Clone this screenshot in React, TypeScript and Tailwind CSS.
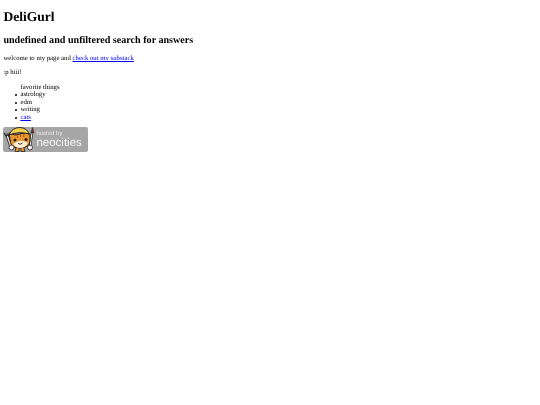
function NeocitiesBadge() {
  return (
    <div className="relative mt-[5.5px] h-[25px] w-[85px] rounded-[2px] bg-[#a6a6a6]">
      <svg className="absolute left-0 top-0" width="34" height="25" viewBox="0 0 34 25">
        {/* wrench */}
        <path d="M4 8 L8 20" stroke="#222" strokeWidth="3" strokeLinecap="round" />
        <path d="M4 8 L8 20" stroke="#e8e8e8" strokeWidth="1.4" strokeLinecap="round" />
        <path d="M1 6 L3 9 L7 7" fill="none" stroke="#222" strokeWidth="1.3" />
        {/* paint brush */}
        <path d="M29 6 L27 19" stroke="#222" strokeWidth="2.4" />
        <path d="M29 6 L27 19" stroke="#eee" strokeWidth="1.1" />
        <path d="M28 6 L29.5 0.5 L31 6 Z" fill="#8c2f2a" stroke="#222" strokeWidth="0.6" />
        {/* head */}
        <path d="M7 12 L6 6 L12 8 L21 6 L27 7 L27 14 Q26 21 18 21 L14 21 Q7 20 7 12 Z" fill="#e8962f" stroke="#222" strokeWidth="1" />
        {/* helmet */}
        <path d="M6 8 Q9 0.5 17 0.5 Q24 1 26 7 Q16 4 6 8 Z" fill="#f3cf4d" stroke="#222" strokeWidth="1" />
        {/* muzzle */}
        <path d="M10 17 Q17 11 25 16 Q22 21 17 21 Q13 21 10 17 Z" fill="#fcefd4" />
        <circle cx="12" cy="13" r="1.5" fill="#222" />
        <circle cx="23" cy="12.5" r="1.5" fill="#222" />
        <path d="M15 16 L17 17.4 L19.5 16" fill="none" stroke="#222" strokeWidth="0.9" />
        <path d="M14 7.5 L14.5 10.5 M17.5 7 L17.5 10 M21 7 L20.5 10" stroke="#a8581c" strokeWidth="1" />
        {/* paws and feet */}
        <circle cx="8.5" cy="20.5" r="2.5" fill="#f5f5f5" stroke="#222" strokeWidth="0.8" />
        <circle cx="27" cy="20.5" r="2.5" fill="#f5f5f5" stroke="#222" strokeWidth="0.8" />
        <path d="M13 21 L12 24.5 L16 24.5 L16 21 M18 21 L18 24.5 L22 24.5 L21 21" fill="#e8962f" stroke="#222" strokeWidth="0.8" />
      </svg>
      <div className="absolute left-[33px] top-[3px] text-[6px] leading-[8px] text-[#e6e6e6] font-['Liberation_Sans',sans-serif]">hosted by</div>
      <div className="absolute left-[33px] top-[9px] text-[11.5px] leading-[14px] text-[#f5f5f5] font-['Liberation_Sans',sans-serif]">neocities</div>
    </div>
  );
}

function Item({ children }: { children: React.ReactNode }) {
  return (
    <li className="relative">
      <span className="absolute left-[-5px] top-[3px] h-[2px] w-[2px] rounded-full bg-black" />
      {children}
    </li>
  );
}

export default function App() {
  return (
    <div className="min-h-[405px] bg-white px-[3.4px] pt-[9px] text-[6.75px] leading-[7.6px] text-black blur-[0.2px] [text-rendering:geometricPrecision] font-['Liberation_Serif',serif]">
      <h1 className="text-[13.5px] leading-[15.5px] font-bold">DeliGurl</h1>
      <h2 className="mt-[10px] text-[10.1px] leading-[11.5px] font-bold">undefined and unfiltered search for answers</h2>
      <p className="mt-[9.4px]">
        welcome to my page and <a href="#" className="text-[#0000ee] underline">check out my substack</a>
      </p>
      <p className="mt-[6.3px]">:p hiii!</p>
      <div className="mt-[6.8px] pl-[17px]">favorite things</div>
      <ul className="list-none pl-[17px]">
        <Item>astrology</Item>
        <Item>edm</Item>
        <Item>writing</Item>
        <Item><a href="#" className="text-[#0000ee] underline">cats</a></Item>
      </ul>
      <NeocitiesBadge />
    </div>
  );
}
